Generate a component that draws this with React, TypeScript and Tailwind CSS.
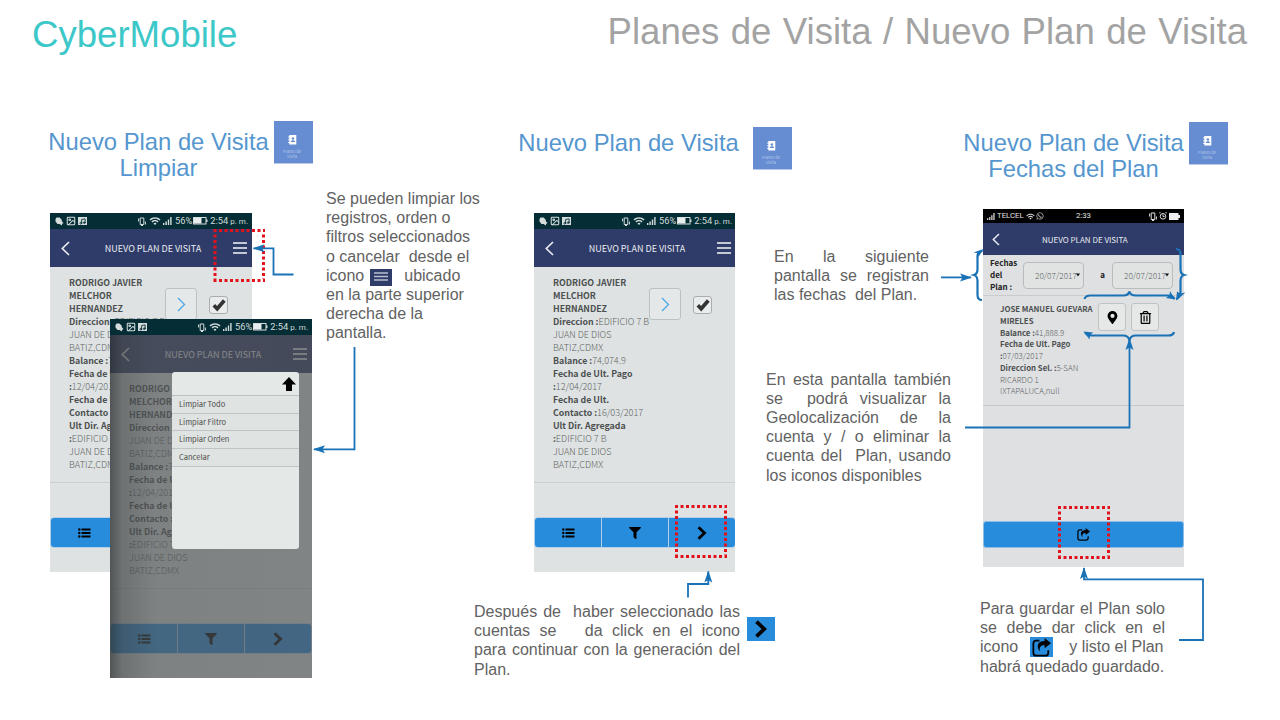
import type { ReactNode } from "react";
import { FaFilter, FaMapMarkerAlt, FaRegTrashAlt, FaWhatsapp } from "react-icons/fa";
import { MdWifi } from "react-icons/md";
import { Image, Music } from "lucide-react";

const APP_FONT = "font-['Noto_Sans_CJK_SC',sans-serif]";

function Heading({ lines }: { lines: string[] }) {
  return (
    <h2 className="w-[221px] text-center text-[23.8px] leading-[26px] text-[#5596cf]">
      {lines.map((l) => (
        <div key={l} className="whitespace-nowrap">{l}</div>
      ))}
    </h2>
  );
}

function PlanTile() {
  return (
    <div className={`flex h-[43px] w-[39px] shrink-0 flex-col items-center border-b border-[#b9c8e6] bg-[#668dd1] pt-[14px] text-white ${APP_FONT}`}>
      <svg className="-ml-[2px]" width="9" height="10" viewBox="0 0 9 10">
        <path d="M1.300 0h7v9.500h-7V8H.2V7h1.100V5.300H.2v-1h1.100V2.600H.2v-1h1.100z" fill="#fff" />
        <circle cx="4.900" cy="3.500" r="1.200" fill="#668dd1" />
        <path d="M2.700 7.100c0-2.500 4.400-2.500 4.400 0z" fill="#668dd1" />
      </svg>
      <div className="mt-[4px] -ml-[3px] text-center text-[4px] leading-[5px] text-[#b4c6ec]">
        Planes de
        <br />
        Visita
      </div>
    </div>
  );
}

function Note({ lines, className }: { lines: { t: ReactNode; last?: boolean }[]; className: string }) {
  return (
    <div className={`text-[16px] leading-[19.2px] text-[#626262] ${className}`}>
      {lines.map((l, i) => (
        <div
          key={i}
          className={l.last ? "h-[19.2px] whitespace-nowrap" : "h-[19.2px] whitespace-nowrap [text-align-last:justify]"}
        >
          {l.t}
        </div>
      ))}
    </div>
  );
}

function Bars({ className }: { className: string }) {
  return (
    <div className={`flex flex-col ${className}`}>
      <i className="h-[2px] bg-current" />
      <i className="h-[2px] bg-current" />
      <i className="h-[2px] bg-current" />
    </div>
  );
}

function Signal() {
  return (
    <svg width="9" height="8" viewBox="0 0 9 8" fill="currentColor">
      <path d="M0 6h1.400v2H0zM2.400 4.500h1.400V8H2.400zM4.800 2.500h1.400V8H4.800zM7.200 0h1.400v8H7.200z" />
    </svg>
  );
}

function Vibrate() {
  return (
    <svg width="8" height="9" viewBox="0 0 8 9" fill="none" stroke="currentColor">
      <path d="M2.200 1h3.600v6.500H2.200zM.6 1.500v3M7.400 4.500v3M3 8.500h2" />
    </svg>
  );
}

function Battery() {
  return (
    <svg width="15" height="8" viewBox="0 0 15 8">
      <rect x="0.500" y="0.500" width="12.500" height="6.500" fill="none" stroke="#d5dcdc" />
      <rect x="1" y="1" width="7.500" height="5.500" fill="#e8eeee" />
      <path d="M13 2.500h1.500v2.500H13z" fill="#d5dcdc" />
    </svg>
  );
}

function StatusBar() {
  return (
    <div className="flex h-[16px] items-center bg-[#042d35] pr-[4px] pl-[5px] font-[Roboto,sans-serif] text-[9.3px] text-[#d5dcdc]">
      <svg width="9" height="9" viewBox="0 0 9 9" fill="#d5dcdc">
        <path d="M1.500.5h3l2 2 .5 2 1.500 1.500L7 7v1.500L4.500 7H2.500L.5 4.500V2z" />
      </svg>
      <Image className="ml-[2px]" size={10} strokeWidth={2.500} />
      <span className="ml-[2px] flex h-[8px] w-[9px] items-center justify-center bg-[#d5dcdc] text-[#042d35]">
        <Music size={7} strokeWidth={3} />
      </span>
      <span className="flex-1" />
      <Vibrate />
      <MdWifi className="ml-[3px]" size={12} />
      <span className="ml-[2px]"><Signal /></span>
      <span className="ml-[3px]">56%</span>
      <span className="ml-px"><Battery /></span>
      <span className="ml-[2px] whitespace-nowrap">2:54<span className="text-[8px]"> p. m.</span></span>
    </div>
  );
}

function BackChevron() {
  return (
    <svg width="9" height="15" viewBox="0 0 9 15" fill="none" stroke="currentColor" strokeWidth="1.700">
      <path d="M8 1L1.300 7.500 8 14" />
    </svg>
  );
}

function ThickChevron({ size }: { size: number }) {
  return (
    <svg width={size} height={size} viewBox="0 0 14 14" fill="none" stroke="currentColor" strokeWidth="2.900">
      <path d="M3.500 1.200L9.500 7 3.500 12.800" />
    </svg>
  );
}

function ListGlyph() {
  return (
    <svg width="13" height="10" viewBox="0 0 13 10" fill="currentColor">
      <circle cx="1.300" cy="1.500" r="1.200" />
      <circle cx="1.300" cy="5" r="1.200" />
      <circle cx="1.300" cy="8.500" r="1.200" />
      <path d="M3.500.6h9v1.800h-9zM3.500 4.100h9v1.800h-9zM3.500 7.600h9v1.800h-9z" />
    </svg>
  );
}

function ShareGlyph({ size }: { size: number }) {
  return (
    <svg width={size} height={size} viewBox="0 0 14 14">
      <path d="M5.500 2H3.200Q1 2 1 4.200v6.600Q1 13 3.200 13h6.600q2.200 0 2.200-2.200V9" fill="none" stroke="#000" strokeWidth="1.300" />
      <path d="M9.300 0L14 3.800 9.300 7.600V5.400C6.500 5.300 5.300 6.500 5.800 10 2.600 5.500 4.500 2.200 9.300 2.200z" fill="#000" />
    </svg>
  );
}

const account: [string, string][] = [
  ["RODRIGO JAVIER", ""],
  ["MELCHOR", ""],
  ["HERNANDEZ", ""],
  ["Direccion :", "EDIFICIO 7 B"],
  ["", "JUAN DE DIOS"],
  ["", "BATIZ,CDMX"],
  ["Balance :", "74,074.9"],
  ["Fecha de Ult. Pago", ""],
  [":", "12/04/2017"],
  ["Fecha de Ult.", ""],
  ["Contacto :", "16/03/2017"],
  ["Ult Dir. Agregada", ""],
  [":", "EDIFICIO 7 B"],
  ["", "JUAN DE DIOS"],
  ["", "BATIZ,CDMX"],
];

const plan: [string, string][] = [
  ["JOSE MANUEL GUEVARA", ""],
  ["MIRELES", ""],
  ["Balance :", "41,888.9"],
  ["Fecha de Ult. Pago", ""],
  [":", "07/03/2017"],
  ["Direccion Sel. :", "5-SAN"],
  ["", "RICARDO 1"],
  ["", "IXTAPALUCA,null"],
];

function Details({ rows, className, light }: { rows: [string, string][]; className: string; light: string }) {
  return (
    <div className={`whitespace-nowrap ${className}`}>
      {rows.map(([b, l], i) => (
        <div key={i} className="flex items-baseline">
          <b className="font-bold text-[#4c5050]">{b}</b>
          <span className={`font-light text-[#606464] ${light}`}>{l}</span>
        </div>
      ))}
    </div>
  );
}

function AccountPhone({ dimmed }: { dimmed?: boolean }) {
  return (
    <div className={`flex h-[359px] w-[202px] flex-col bg-[#dee2e2] ${APP_FONT}`}>
      <StatusBar />
      <div className="relative flex flex-1 flex-col">
        <div className="flex h-[38px] items-center justify-between bg-[#2f3b68] pr-[5px] pl-[11px] text-[#e8ebf2]">
          <BackChevron />
          <span className="ml-[3px] pt-px text-[9px]">NUEVO PLAN DE VISITA</span>
          <Bars className="w-[14px] gap-[3px] text-[#c3c8d5]" />
        </div>
        <div className="flex h-[216px] border-b border-[#cbcfcf] pt-[8px] pl-[19px]">
          <Details rows={account} className="mt-[0.6px] w-[96px] text-[8.8px] leading-[13.07px]" light="text-[9.1px]" />
          <div className="mt-[13px] flex h-[32px] w-[32px] items-center justify-center rounded-[3px] border border-[#bcc2c2] bg-[#e4e8e8] text-[#42a5e6]">
            <svg width="9" height="15" viewBox="0 0 9 15" fill="none" stroke="currentColor" strokeWidth="1.200">
              <path d="M1 1l6.500 6.500L1 14" />
            </svg>
          </div>
          <div className="mt-[21px] ml-[12px] flex h-[18px] w-[19px] items-center justify-center rounded-[3px] border border-[#a9adad] bg-[#e9ecec]">
            <svg width="14" height="14" viewBox="0 0 14 14">
              <path d="M1.800 7.300L5.200 10.700 12.300 2.500" fill="none" stroke="#333" strokeWidth="3.700" />
            </svg>
          </div>
        </div>
        <div className="mt-[34px] grid h-[31px] grid-cols-3 gap-[1px] overflow-hidden rounded-[4px] border border-[#b5d0e6] bg-[#b5d0e6] text-black">
          <div className="flex items-center justify-center bg-[#288cdd]"><ListGlyph /></div>
          <div className="flex items-center justify-center bg-[#288cdd]"><FaFilter size={12} /></div>
          <div className="flex items-center justify-center bg-[#288cdd]"><ThickChevron size={14} /></div>
        </div>
        {dimmed && (
          <div className="absolute inset-0 bg-[linear-gradient(90deg,rgba(50,54,56,.82)_0,rgba(70,74,75,.74)_12px,rgba(80,84,85,.68)_45px,rgba(80,82,83,.65)_100%)]">
            <div className="mt-[37px] ml-[62px] flex h-[177px] w-[127px] flex-col rounded-[3px] bg-[#e4e8e7] text-[7.5px] text-[#4c4c4c]">
              <div className="flex h-[24px] justify-end border-b border-[#bcc0c0] pt-[5px] pr-[3px]">
                <svg width="14" height="14" viewBox="0 0 14 14"><path d="M7 0l7 7.500h-4V14H4V7.500H0z" fill="#000" /></svg>
              </div>
              {["Limpiar Todo", "Limpiar Filtro", "Limpiar Orden", "Cancelar"].map((m) => (
                <div key={m} className="h-[17.700px] border-b border-[#c0c4c4] bg-[#dfe3e2] pl-[7px] leading-[16px]">{m}</div>
              ))}
            </div>
          </div>
        )}
      </div>
    </div>
  );
}

function DateField() {
  return (
    <div className="flex h-[27px] w-[61px] items-center justify-end rounded-[4px] border border-[#b9bcbd] bg-[#e1e3e3] pr-[3px] text-[8.300px] font-light text-[#606363]">
      20/07/2017
      <svg className="-ml-[1px]" width="4" height="4" viewBox="0 0 5 4"><path d="M0 0h5L2.500 4z" fill="#111" /></svg>
    </div>
  );
}

function DatesPhone() {
  return (
    <div className={`flex h-[358px] w-[201px] flex-col bg-[#dfe0e2] ${APP_FONT}`}>
      <div className="grid h-[14px] grid-cols-[1fr_auto_1fr] items-center bg-black px-[4px] font-[Roboto,sans-serif] text-[7.8px] text-[#e2e2e2]">
        <div className="flex items-center gap-[1px]">
          <svg width="8" height="7" viewBox="0 0 9 8" fill="currentColor">
            <path d="M0 6h1.400v2H0zM2.400 4.500h1.400V8H2.400zM4.800 2.500h1.400V8H4.800zM7.200 0h1.400v8H7.200z" />
          </svg>
          <span className="mr-[1px] ml-[1px]">TELCEL</span>
          <MdWifi size={9} />
          <FaWhatsapp size={8} />
        </div>
        <div>2:33</div>
        <div className="flex items-center justify-end gap-[2px]">
          <Vibrate />
          <svg width="8" height="8" viewBox="0 0 8 8" fill="none" stroke="#e2e2e2"><circle cx="4" cy="4.300" r="2.800" /><path d="M4 2.500v2h1.500M0 1.500L1.500 0M8 1.500L6.500 0" /></svg>
          <svg width="11" height="7" viewBox="0 0 11 7"><path d="M0 0h9.500v2H11v3H9.500v2H0z" fill="#eee" /></svg>
        </div>
      </div>
      <div className="flex h-[32px] items-center bg-[#2f3b68] pt-px pl-[9px] text-[#e8ebf2]">
        <svg width="8" height="13" viewBox="0 0 8 13" fill="none" stroke="currentColor" strokeWidth="1.500"><path d="M7 1L1.300 6.500 7 12" /></svg>
        <span className="ml-[42px] text-[8px]">NUEVO PLAN DE VISITA</span>
      </div>
      <div className="flex h-[41px] items-center border-b border-[#c9cbcd] pl-[7px]">
        <div className="w-[33px] text-[8px] leading-[11.800px] font-bold text-[#222]">
          Fechas
          <br />
          del
          <br />
          Plan :
        </div>
        <DateField />
        <b className="w-[28px] pl-[9px] text-center text-[8px] font-bold text-[#222]">a</b>
        <DateField />
      </div>
      <div className="flex h-[110px] border-b border-[#c6c8ca] pt-[7px] pl-[17px]">
        <Details rows={plan} className="w-[98px] text-[7.8px] leading-[11.750px]" light="text-[8px]" />
        <div className="flex h-[28px] w-[28px] items-center justify-center rounded-[3px] border border-[#bfc3c3] bg-[#e6e8e8] text-black"><FaMapMarkerAlt size={13} /></div>
        <div className="ml-[5px] flex h-[28px] w-[28px] items-center justify-center rounded-[3px] border border-[#bfc3c3] bg-[#e6e8e8] text-black"><FaRegTrashAlt size={13} /></div>
      </div>
      <div className="mt-[115px] flex h-[27px] items-center justify-center rounded-[3px] border border-[#8dbde4] bg-[#288cdd]">
        <ShareGlyph size={13} />
      </div>
    </div>
  );
}

function Connectors() {
  return (
    <svg className="pointer-events-none absolute inset-0" width="1280" height="720" viewBox="0 0 1280 720" fill="none">
      <defs>
        <marker id="tip" viewBox="0 0 12 12" refX="11" refY="6" markerWidth="12" markerHeight="12" markerUnits="userSpaceOnUse" orient="auto-start-reverse">
          <path d="M0 2l12 4-12 4 2.500-4z" fill="#1a72b6" />
        </marker>
      </defs>
      <g stroke="#e3121a" strokeWidth="3" strokeDasharray="3 2.500">
        <path d="M213.500 230.500H265M263.500 234.500V279M213.500 280.500H265M215 234.500V279" />
        <path d="M675 506.500H727M725.500 510.500V555M675 556.500H727M676.500 510.500V555" />
        <path d="M1058 507.500H1110M1108.500 511.500V556M1058 557.500H1110M1059.500 511.500V556" />
      </g>
      <g stroke="#1a72b6" strokeWidth="1.800">
        <path d="M293.500 274.500H273.500V248.300H253.500" markerEnd="url(#tip)" />
        <path d="M354.500 347V449.300H314" markerEnd="url(#tip)" />
        <path d="M688 597.500V584H708.300V571.500" markerEnd="url(#tip)" />
        <path d="M941 277.400H971" markerEnd="url(#tip)" />
        <path d="M965 427.500H1129.500V339" markerEnd="url(#tip)" />
        <path d="M1179 640H1203V579.300H1084V568" markerEnd="url(#tip)" />
      </g>
      <g stroke="#1a72b6" strokeWidth="2.200">
        <path d="M982 300q-4.500 0-4.500-5V281q0-5-3.500-6 3.500-1 3.500-6V256q0-4 5-5" />
        <path d="M1176 249q4.500 0 4.500 5V269q0 5 3.500 6-3.500 1-3.500 6V292q0 5-4 7" />
        <path d="M1084.500 299q1-3.500 6-3.500H1123q5.500 0 6.400-4 1 4 6.400 4H1168q5 0 6.500 3.500" />
        <path d="M1085 332.500q2 3 6 3H1123q5.500 0 6.400 5 1-5 6.400-5H1168q5.500 0 6-3.500" />
      </g>
      <g fill="#1a72b6">
        <path d="M973.500 252.500l10-3.500-5 8-1.500-4z" />
        <path d="M1176 300.500l1-9 3 2 5.500-1z" />
        <path d="M1175 299.500l-9-1.500 3.500-3 .5-4z" />
        <path d="M1083.500 331.500l9.500 1-3 3-.5 4z" />
      </g>
    </svg>
  );
}

export default function App() {
  return (
    <div className="relative h-[720px] w-[1280px] overflow-hidden bg-white font-['Liberation_Sans',Arial,sans-serif]">
      <header className="flex h-[100px] items-start justify-between pr-[33px] pl-[32px] leading-[42px]">
        <h1 className="pt-[14px] text-[36.600px] text-[#3cc8c8]">CyberMobile</h1>
        <div className="pt-[11px] text-[36.600px] text-[#a3a3a3] [word-spacing:1.2px]">Planes de Visita / Nuevo Plan de Visita</div>
      </header>
      <main className="flex items-start">
        <section className="w-[326px] shrink-0 pl-[48px]">
          <div className="flex h-[113px] pt-[21px]">
            <div className="pt-[8px]"><Heading lines={["Nuevo Plan de Visita", "Limpiar"]} /></div>
            <div className="ml-[5px]"><PlanTile /></div>
          </div>
          <div className="relative ml-[2px] w-[202px]">
            <AccountPhone />
            <div className="absolute top-[106px] left-[60px]"><AccountPhone dimmed /></div>
          </div>
        </section>

        <section className="w-[148px] shrink-0 pt-[89px]">
          <Note
            className="w-[160px]"
            lines={[
              { t: "Se pueden limpiar los", last: true },
              { t: "registros, orden o", last: true },
              { t: "filtros seleccionados", last: true },
              { t: "o cancelar \u00a0desde el", last: true },
              {
                t: (
                  <span className="flex">
                    icono
                    <span className="mt-[3px] ml-[6px] flex h-[17px] w-[22px] justify-center bg-[#2f3b68] pt-[3px]">
                      <svg width="14" height="9" viewBox="0 0 14 9"><path d="M0 1h14M0 4.500h14M0 8h14" stroke="#b9bed0" strokeWidth="1.500" /></svg>
                    </span>
                    <span className="ml-[12px]">ubicado</span>
                  </span>
                ),
                last: true,
              },
              { t: "en la parte superior", last: true },
              { t: "derecha de la", last: true },
              { t: "pantalla.", last: true },
            ]}
          />
        </section>

        <section className="w-[292px] shrink-0">
          <div className="flex h-[113px] pt-[27px] pl-[44px]">
            <div className="pt-[3px]"><Heading lines={["Nuevo Plan de Visita"]} /></div>
            <div className="ml-[14px]"><PlanTile /></div>
          </div>
          <div className="ml-[60px] w-[201px] overflow-hidden"><AccountPhone /></div>
          <div className="mt-[30px] flex">
            <Note
              className="w-[266px] shrink-0"
              lines={[
                { t: "Después de \u00a0haber seleccionado las" },
                { t: "cuentas se \u00a0 da click en el icono" },
                { t: "para continuar con la generación del" },
                { t: "Plan.", last: true },
              ]}
            />
            <div className="mt-[15px] ml-[7px] flex h-[24px] w-[28px] shrink-0 items-center justify-center bg-[#288cdd]"><ThickChevron size={18} /></div>
          </div>
        </section>

        <section className="w-[217px] shrink-0 pt-[147px]">
          <Note
            className="ml-[8px] w-[155px]"
            lines={[
              { t: "En la siguiente" },
              { t: "pantalla se registran" },
              { t: "las fechas \u00a0del Plan.", last: true },
            ]}
          />
          <Note
            className="mt-[65px] w-[185px]"
            lines={[
              { t: "En esta pantalla también" },
              { t: "se \u00a0podrá visualizar la" },
              { t: "Geolocalización de la" },
              { t: "cuenta y / o eliminar la" },
              { t: "cuenta del \u00a0Plan, usando" },
              { t: "los iconos disponibles", last: true },
            ]}
          />
        </section>

        <section className="w-[297px] shrink-0">
          <div className="-ml-[20px] flex h-[109px] pt-[22px]">
            <div className="pt-[8px]"><Heading lines={["Nuevo Plan de Visita", "Fechas del Plan"]} /></div>
            <div className="ml-[5px]"><PlanTile /></div>
          </div>
          <DatesPhone />
          <Note
            className="mt-[32px] -ml-[3px] w-[185px]"
            lines={[
              { t: "Para guardar el Plan solo" },
              { t: "se debe dar click en el" },
              {
                t: (
                  <span className="flex">
                    icono
                    <span className="ml-[12px] flex h-[20px] w-[23px] items-center justify-center bg-[#288cdd]"><ShareGlyph size={19} /></span>
                    <span className="ml-[16px]">y listo el Plan</span>
                  </span>
                ),
                last: true,
              },
              { t: "habrá quedado guardado.", last: true },
            ]}
          />
        </section>
      </main>
      <Connectors />
    </div>
  );
}
